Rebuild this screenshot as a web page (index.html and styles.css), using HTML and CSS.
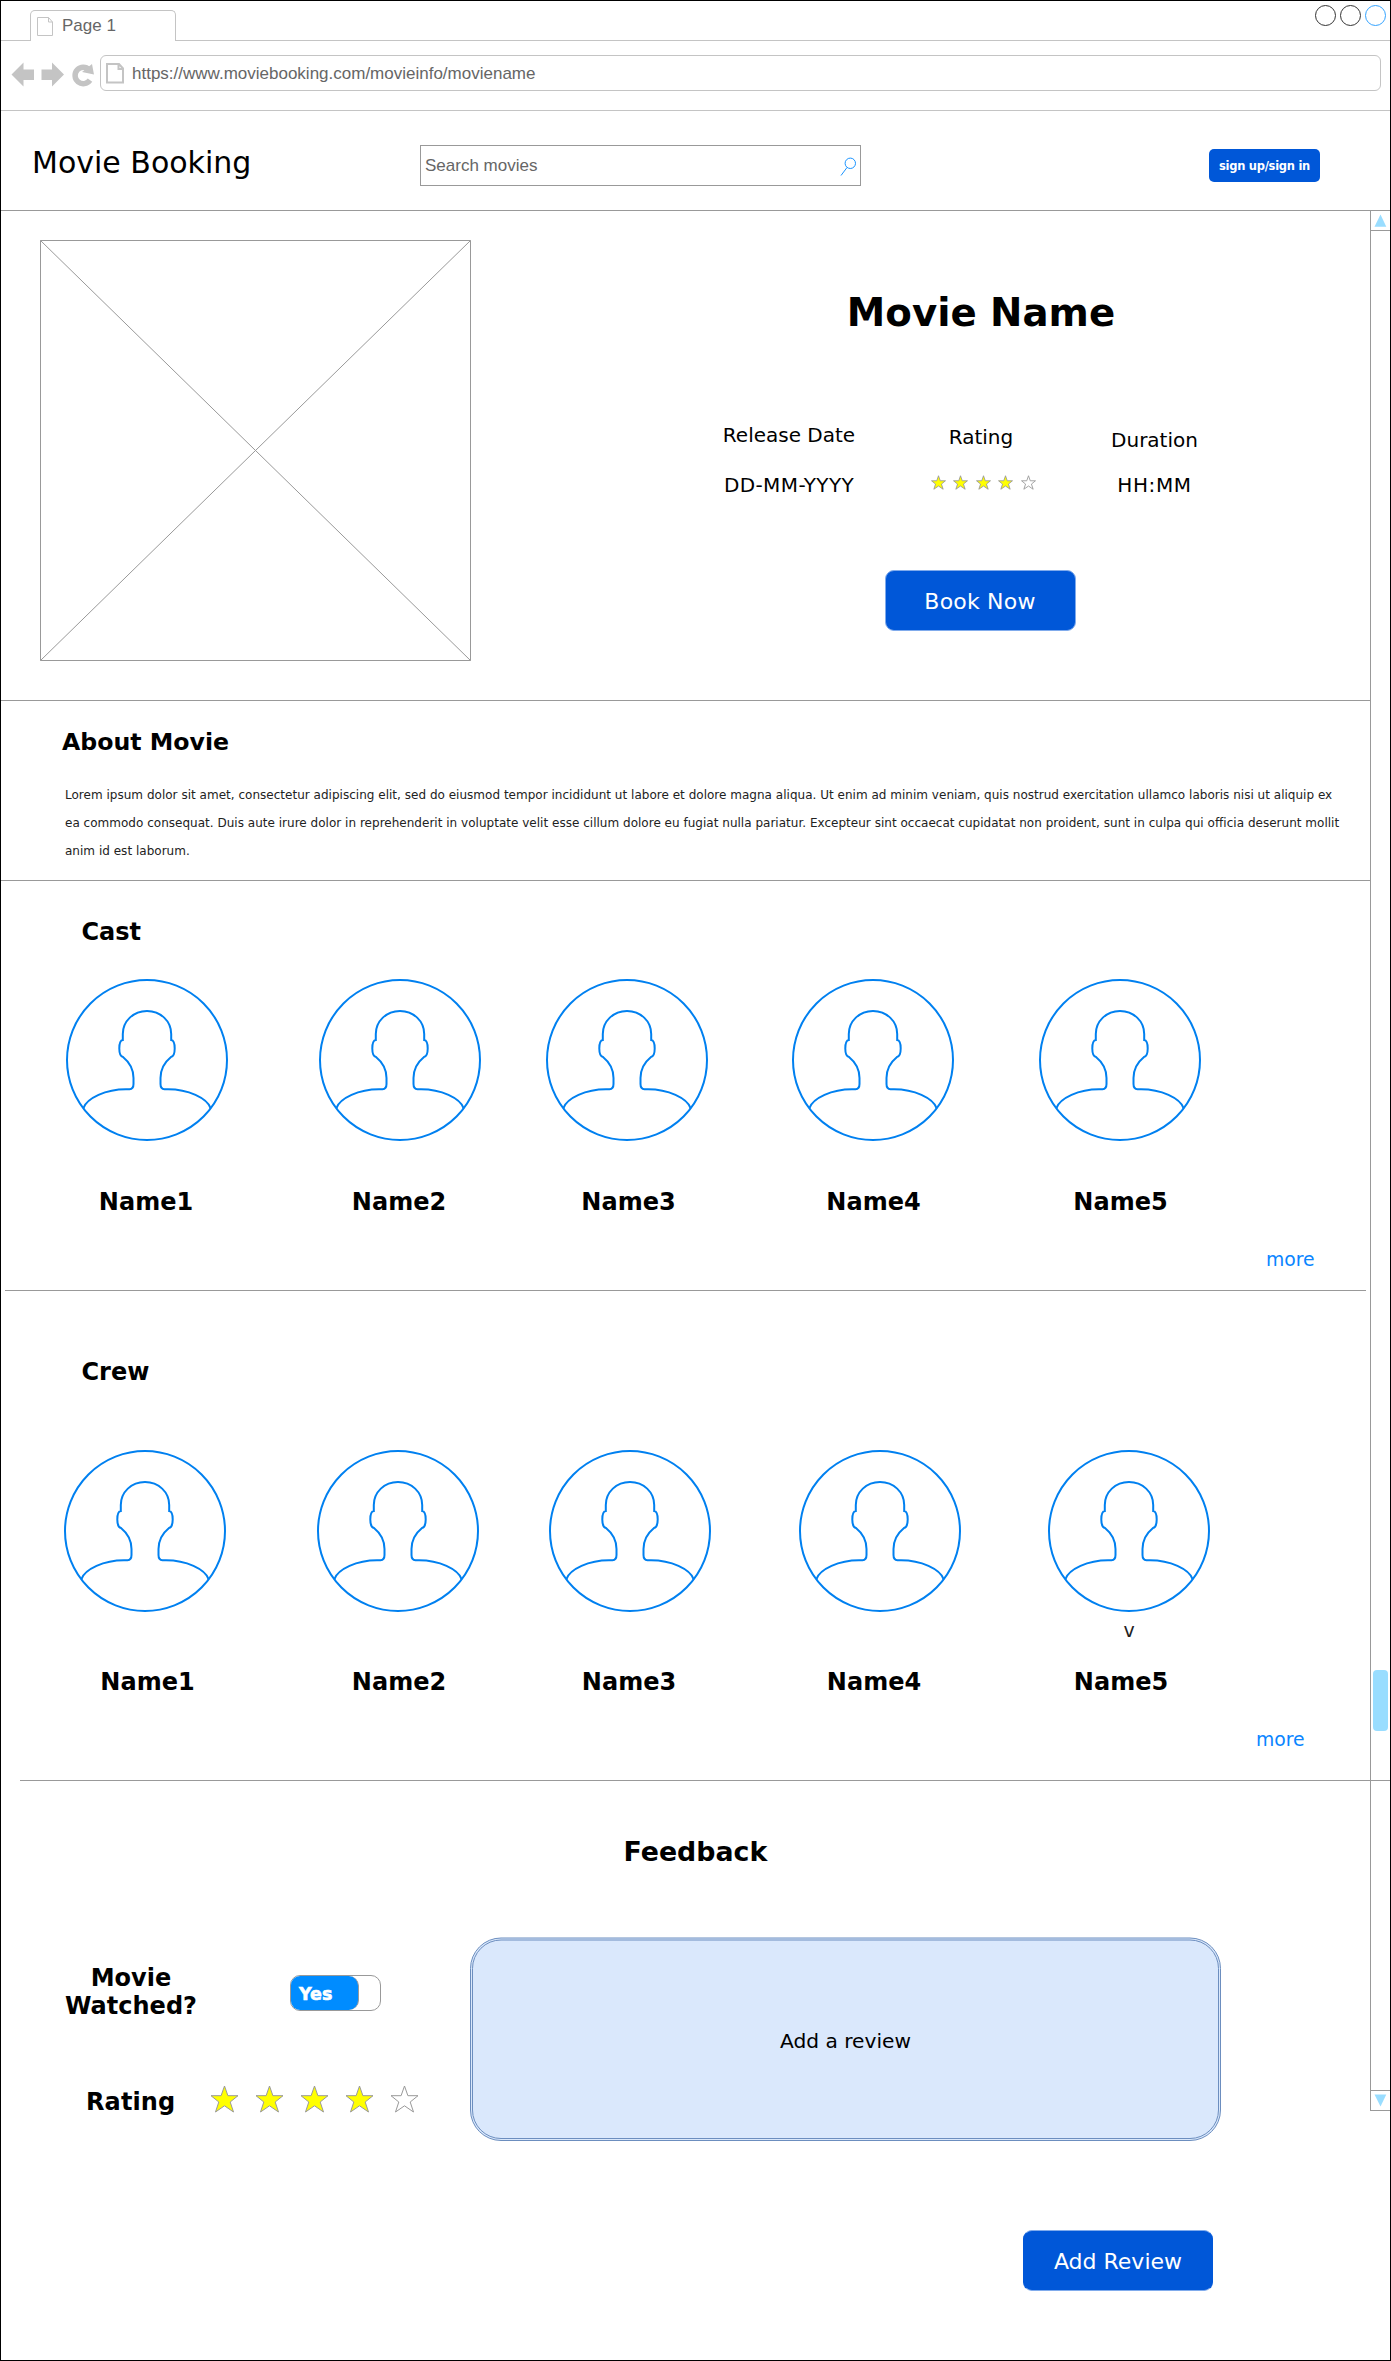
FILE: index.html
```
<!DOCTYPE html>
<html lang="en">
<head>
<meta charset="utf-8">
<title>Movie Booking</title>
<link rel="stylesheet" href="styles.css">
</head>
<body>
<svg class="defs" aria-hidden="true">
  <symbol id="avatar" viewBox="0 0 162 162">
    <circle cx="81" cy="81" r="80"/>
    <path d="M17.3 129.3C21 119 40 110.3 60 110.3H63.5Q67.5 110 67.5 105V99C67.5 89 62.5 82.500 57 78C54.500 77.500 53.300 74.500 53.300 69.500C53.300 65 54.500 61.300 56.800 61V55C56.800 42 67.500 32 81 32C94.500 32 105.200 42 105.200 55V61C107.500 61.300 108.700 65 108.700 69.500C108.700 74.500 107.500 77.500 105 78C99.500 82.500 94.500 89 94.500 99V105Q94.500 110 98.500 110.300H102C122 110.300 141 119 144.700 129.300"/>
  </symbol>
  <symbol id="star" viewBox="0 0 29 28">
    <path d="M14.5 1L17.900 10.700H28L20.200 17L23.500 27L14.500 20.800L5.500 27L8.800 17L1 10.700H11.100Z"/>
  </symbol>
</svg>
<div class="window">
  <div class="tabs">
    <div class="tab">
      <svg class="tab-icon" width="17" height="20" viewBox="0 0 17 20"><path d="M.5 .5H11.500L15.500 5V18.500H.5ZM11.500 .5V5H15.500"/></svg>
      <span>Page 1</span>
    </div>
    <div class="controls"><i></i><i></i><i class="blue"></i></div>
  </div>
  <div class="toolbar">
    <svg class="nav" width="90" height="28" viewBox="0 0 90 28">
      <path d="M.5 13.500L12.500 1.500V8.500H23V19H12.500V25.500Z"/>
      <path d="M53 13.500L41 1.500V8.500H30.500V19H41V25.500Z"/>
      <path class="arc" d="M78.200 8.800A8.200 8.200 0 1 0 79 19.200"/>
      <path d="M81 3L83 13.500L71 11Z"/>
    </svg>
    <div class="address">
      <svg class="address-icon" width="19" height="21" viewBox="0 0 19 21"><path d="M1 1H13L17 5.500V19.500H1ZM12.500 1V6H17"/></svg>
      <span>https://www.moviebooking.com/movieinfo/moviename</span>
    </div>
  </div>
  <header class="header">
    <div class="brand">Movie Booking</div>
    <div class="search">
      <span>Search movies</span>
      <svg width="18" height="22" viewBox="0 0 18 22"><circle cx="11.300" cy="7.300" r="5.200"/><path d="M8 11.500L2 19.500"/></svg>
    </div>
    <button class="signin">sign up/sign in</button>
  </header>
  <div class="body">
    <main class="content">
      <section class="hero">
        <svg class="poster" width="431" height="421" viewBox="0 0 431 421"><path d="M.5 .5H430.500V420.500H.5ZL430.500 420.500M430.500 .5L.5 420.500"/></svg>
        <div class="info">
          <h1>Movie Name</h1>
          <div class="facts">
            <div class="fact release"><span>Release Date</span><span>DD-MM-YYYY</span></div>
            <div class="fact rating"><span>Rating</span>
              <div class="stars small">
                <svg><use href="#star"/></svg><svg><use href="#star"/></svg><svg><use href="#star"/></svg><svg><use href="#star"/></svg><svg class="off"><use href="#star"/></svg>
              </div>
            </div>
            <div class="fact duration"><span>Duration</span><span class="time">HH:MM</span></div>
          </div>
          <button class="button book">Book Now</button>
        </div>
      </section>
      <section class="about">
        <h2>About Movie</h2>
        <p>Lorem ipsum dolor sit amet, consectetur adipiscing elit, sed do eiusmod tempor incididunt ut labore et dolore magna aliqua. Ut enim ad minim veniam, quis nostrud exercitation ullamco laboris nisi ut aliquip ex<br>ea commodo consequat. Duis aute irure dolor in reprehenderit in voluptate velit esse cillum dolore eu fugiat nulla pariatur. Excepteur sint occaecat cupidatat non proident, sunt in culpa qui officia deserunt mollit<br>anim id est laborum.</p>
      </section>
      <section class="people cast">
        <h2>Cast</h2>
        <div class="row">
          <figure><svg><use href="#avatar"/></svg><figcaption>Name1</figcaption></figure>
          <figure><svg><use href="#avatar"/></svg><figcaption>Name2</figcaption></figure>
          <figure><svg><use href="#avatar"/></svg><figcaption>Name3</figcaption></figure>
          <figure><svg><use href="#avatar"/></svg><figcaption>Name4</figcaption></figure>
          <figure><svg><use href="#avatar"/></svg><figcaption>Name5</figcaption></figure>
        </div>
        <a class="more">more</a>
      </section>
      <section class="people crew">
        <h2>Crew</h2>
        <div class="row">
          <figure><svg><use href="#avatar"/></svg><span class="note"></span><figcaption>Name1</figcaption></figure>
          <figure><svg><use href="#avatar"/></svg><span class="note"></span><figcaption>Name2</figcaption></figure>
          <figure><svg><use href="#avatar"/></svg><span class="note"></span><figcaption>Name3</figcaption></figure>
          <figure><svg><use href="#avatar"/></svg><span class="note"></span><figcaption>Name4</figcaption></figure>
          <figure><svg><use href="#avatar"/></svg><span class="note">v</span><figcaption>Name5</figcaption></figure>
        </div>
        <a class="more">more</a>
      </section>
      <section class="feedback">
        <h2>Feedback</h2>
        <div class="form">
          <div class="fields">
            <div class="field watched"><label>Movie<br>Watched?</label><div class="toggle"><b>Yes</b></div></div>
            <div class="field score"><label>Rating</label>
              <div class="stars">
                <svg><use href="#star"/></svg><svg><use href="#star"/></svg><svg><use href="#star"/></svg><svg><use href="#star"/></svg><svg class="off"><use href="#star"/></svg>
              </div>
            </div>
          </div>
          <div class="review">
            <svg class="frame" width="751" height="204" viewBox="0 0 751 204"><rect x=".5" y="1" width="750" height="202.500" rx="30.500"/><rect x="2.500" y="3" width="746" height="198.500" rx="28.500"/></svg>
            <span>Add a review</span>
          </div>
        </div>
        <button class="button add">Add Review</button>
      </section>
    </main>
    <div class="scrollbar">
      <svg class="up" width="19" height="19" viewBox="0 0 19 19"><path d="M9.500 3.500L15.300 15.800H3.500Z"/></svg>
      <div class="thumb"></div>
      <svg class="down" width="19" height="19" viewBox="0 0 19 19"><path d="M3.500 3.500H15.300L9.500 15.500Z"/></svg>
    </div>
  </div>
</div>
</body>
</html>
```
FILE: styles.css
```
* { box-sizing: border-box; }
body { margin: 0; background: #fff; color: #000; font-family: "DejaVu Sans", Verdana, sans-serif; }
h1, h2, p, figure { margin: 0; }
svg { display: block; flex: none; }
button { border: 0; padding: 0; font-family: inherit; color: #fff; background: #0057d8; }
.defs { position: absolute; width: 0; height: 0; }

.window { width: 1391px; height: 2361px; border: 1px solid #000; overflow: hidden; }

/* Browser chrome */
.tabs { display: flex; justify-content: space-between; height: 40px; border-bottom: 1px solid #c4c4c4; padding: 4px 4px 0 29px; }
.tab { display: flex; width: 146px; height: 31px; margin-top: 5px; padding: 6px 0 0 6px; background: #fff; border: 1px solid #c4c4c4; border-bottom: 0; border-radius: 5px 5px 0 0; font: 17px/20px "Liberation Sans", Arial, sans-serif; color: #666; }
.tab span { margin: -1px 0 0 8px; }
.tab-icon path, .address-icon path { fill: none; stroke: #c4c4c4; }
.controls { display: flex; gap: 4px; }
.controls i { width: 21px; height: 21px; border: 1px solid #333; border-radius: 50%; }
.controls .blue { border-color: #33a3ff; }
.toolbar { display: flex; height: 70px; padding: 14px 9px 0 10px; border-bottom: 1px solid #c4c4c4; }
.nav { margin: 6px -1px 0 0; fill: #c4c4c4; }
.nav .arc { fill: none; stroke: #c4c4c4; stroke-width: 5.5; }
.address { flex: 1; display: flex; height: 36px; padding: 7px 0 0 5px; border: 1px solid #c4c4c4; border-radius: 6px; font: 17px/20px "Liberation Sans", Arial, sans-serif; color: #666; }
.address-icon path { stroke-width: 2; }
.address span { margin: 1px 0 0 7px; }

.header { display: flex; height: 100px; padding-left: 31px; border-bottom: 1px solid #999; }
.brand { width: 388px; padding-top: 33px; font-size: 30px; line-height: 37px; }
.search { display: flex; justify-content: space-between; width: 441px; height: 41px; margin-top: 34px; padding: 10px 3px 0 4px; border: 1px solid #999; font: 17px/20px "Liberation Sans", Arial, sans-serif; color: #666; }
.search svg { fill: none; stroke: #1a94ff; }
.signin { width: 111px; height: 33px; margin: 38px 0 0 348px; border-radius: 5px; font-size: 11.5px; font-weight: bold; letter-spacing: -.28px; }

/* Page */
.body { display: flex; align-items: flex-start; }
.content { flex: none; width: 1369px; }
h2 { font-size: 24px; line-height: 28px; }

.hero { display: flex; height: 490px; padding: 29px 0 0 39px; border-bottom: 1px solid #999; }
.poster { fill: none; stroke: #999; }
.info { display: flex; flex-direction: column; align-items: center; width: 560px; margin-left: 230px; padding-top: 50px; }
h1 { font-size: 38.7px; line-height: 45px; }
.facts { display: flex; width: 518px; height: 80px; margin-top: 85px; font-size: 20px; line-height: 24px; }
.fact { display: flex; flex-direction: column; align-items: center; white-space: nowrap; }
.release { width: 134px; padding-top: 3px; gap: 26px; }
.rating { width: 110px; margin-left: 70px; padding-top: 5px; gap: 26px; }
.duration { width: 100px; margin-left: 68.5px; padding-top: 8px; gap: 21px; }
.release span + span { letter-spacing: .4px; }
.time { letter-spacing: .6px; }
.stars { display: flex; gap: 16px; }
.stars svg { width: 29px; height: 28px; fill: #ff0; stroke: #999; }
.stars .off { fill: #fff; }
.stars.small { gap: 7.5px; margin-left: 4px; }
.stars.small svg { width: 15px; height: 15px; stroke-width: 1.7; }
.button { border: 1px solid #0057d8; border-color: #80abec #0057d8; border-radius: 9px; width: 190px; height: 61px; }
.book { width: 191px; margin: 70px 2px 0 0; border-color: #80abec; font-size: 22px; letter-spacing: .2px; padding-top: 2px; }

.about { height: 180px; padding: 27px 0 0 61px; border-bottom: 1px solid #999; }
.about h2 { font-size: 23.65px; }
.about p { margin: 25px 0 0 3px; font-size: 12px; line-height: 28px; letter-spacing: .018px; color: #222; white-space: nowrap; }

.people { display: flex; flex-direction: column; align-items: flex-start; }
.people h2 { margin-left: 80.5px; }
.people::after { content: ""; flex: none; height: 1px; background: #999; margin-top: auto; }
.row { display: flex; }
figure { flex: none; display: flex; flex-direction: column; align-items: center; width: 162px; }
figure svg { width: 162px; height: 162px; fill: none; stroke: #0080f0; stroke-width: 2; }
figcaption { height: 28px; font-size: 24px; font-weight: bold; line-height: 28px; padding-left: 1px; }
.more { height: 22px; font-size: 18.8px; line-height: 22px; color: #0a85ff; }

.cast { height: 410px; padding-top: 37px; }
.cast .row { margin: 33px 0 0 65px; }
.cast figure:nth-child(2) { margin-left: 91px; }
.cast figure:nth-child(3) { margin-left: 65px; }
.cast figure:nth-child(4) { margin-left: 84px; }
.cast figure:nth-child(5) { margin-left: 85px; }
.cast figcaption { margin-top: 47px; }
.cast figure:nth-child(1) figcaption, .cast figure:nth-child(2) figcaption { margin-left: -3px; }
.cast figure:nth-child(3) figcaption { margin-left: 2px; }
.cast .more { margin: 33px 0 0 1265px; }
.cast::after { width: 1361px; margin-left: 4px; }

.crew { height: 490px; padding-top: 67px; }
.crew .row { margin: 64px 0 0 63px; }
.crew figure:nth-child(2) { margin-left: 90.5px; }
.crew figure:nth-child(3) { margin-left: 70.5px; }
.crew figure:nth-child(4) { margin-left: 88px; }
.crew figure:nth-child(5) { margin-left: 87px; }
.note { height: 22px; margin: 7px 0 27px; font-size: 19px; line-height: 22px; color: #222; }
.crew figure:nth-child(1) figcaption { margin-left: 4px; }
.crew figure:nth-child(2) figcaption { margin-left: 2px; }
.crew figure:nth-child(3) figcaption { margin-left: -3px; }
.crew figure:nth-child(4) figcaption { margin-left: -13px; }
.crew figure:nth-child(5) figcaption { margin-left: -17px; }
.crew .more { margin: 33px 0 0 1255px; }
.crew::after { width: 1370px; margin-left: 19px; }

.feedback { height: 579px; padding-top: 55px; }
.feedback h2 { margin-left: 622.5px; font-size: 26.8px; line-height: 32px; }
.form { display: flex; margin-top: 69px; }
.fields { width: 469px; padding-top: 27px; }
.field { display: flex; font-size: 24px; font-weight: bold; line-height: 28px; }
.watched label { width: 260px; text-align: center; }
.toggle { width: 91px; height: 36px; margin: 11px 0 0 29px; border: 1px solid #999; border-radius: 10px; }
.toggle b { display: block; width: 68px; height: 34px; padding: 1px 0 0 8px; background: #008cff; border-right: 1px solid #999; border-radius: 9px 10px 10px 9px; color: #fff; font-size: 17.500px; line-height: 34px; -webkit-text-stroke: .6px #fff; }
.score { margin-top: 68px; padding-left: 85px; }
.score label { width: 124px; letter-spacing: .1px; }
.score .stars { margin-top: -3px; }
.review { position: relative; display: flex; align-items: center; justify-content: center; width: 751px; height: 204px; font-size: 20.2px; }
.review span { position: relative; padding-top: 3px; }
.frame { position: absolute; inset: 0; fill: #dae8fc; stroke: #6c8ebf; }
.add { display: block; margin: 89px 0 0 1022px; padding-top: 1px; font-size: 22px; }

.scrollbar { flex: none; display: flex; flex-direction: column; width: 21px; height: 1901px; margin: -1px -1px 0 0; border: 1px solid #999; position: relative; }
.scrollbar svg { fill: #9df; }
.up { box-shadow: 0 1px #999; }
.down { margin-top: auto; box-shadow: 0 -1px #999; }
.thumb { width: 15px; height: 61px; margin: 1440px 0 0 2px; background: #9df; border-radius: 4px; }
```
